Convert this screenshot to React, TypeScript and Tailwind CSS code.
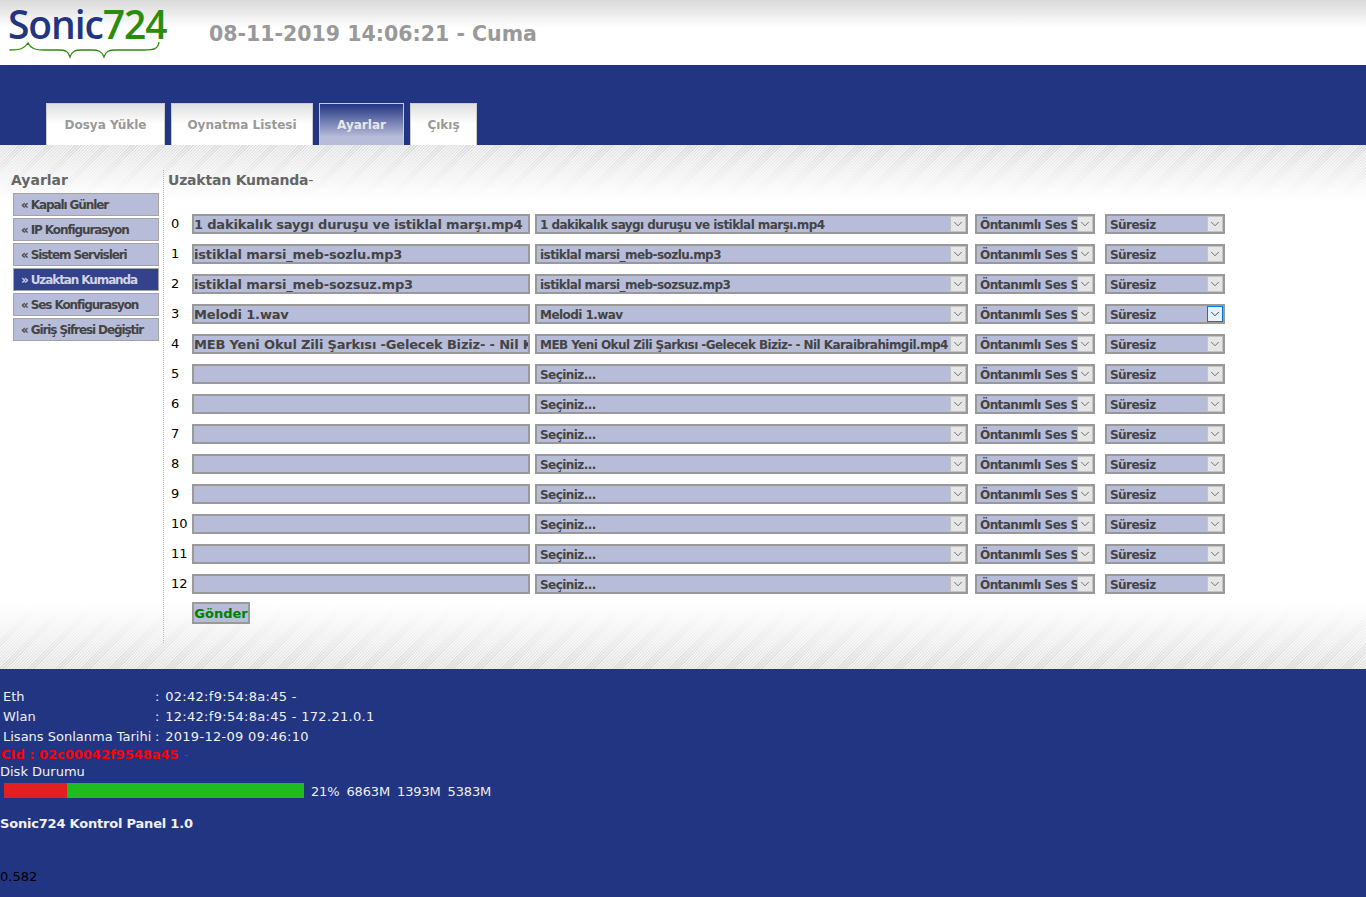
import { ChevronDown } from 'lucide-react';

const tabs = [
  { label: 'Dosya Yükle', width: 'w-[119px]', active: false },
  { label: 'Oynatma Listesi', width: 'w-[142px]', active: false },
  { label: 'Ayarlar', width: 'w-[85px]', active: true },
  { label: 'Çıkış', width: 'w-[67px]', active: false },
];

const menu = [
  { label: '« Kapalı Günler', active: false },
  { label: '« IP Konfigurasyon', active: false },
  { label: '« Sistem Servisleri', active: false },
  { label: '» Uzaktan Kumanda', active: true },
  { label: '« Ses Konfigurasyon', active: false },
  { label: '« Giriş Şifresi Değiştir', active: false },
];

const files = [
  '1 dakikalık saygı duruşu ve istiklal marşı.mp4',
  'istiklal marsi_meb-sozlu.mp3',
  'istiklal marsi_meb-sozsuz.mp3',
  'Melodi 1.wav',
  'MEB Yeni Okul Zili Şarkısı -Gelecek Biziz- - Nil Karaibrahimgil.mp4',
];

const rows = Array.from({ length: 13 }, (_, i) => i);

const SelectBox = ({ value, width, focused }: { value: string; width: string; focused?: boolean }) => (
  <div className={`relative h-5 shrink-0 border-2 border-[#999] bg-[#b7bcd9] text-[12px] leading-[16px] font-bold tracking-[-0.56px] text-[#444] ${width}`}>
    <div className="h-4 overflow-hidden pt-[1px] pr-[16px] pl-[3px] whitespace-nowrap">{value}</div>
    <div className={`absolute top-0 right-0 flex h-4 w-4 items-center justify-center ${focused ? 'border border-[#0078d7] bg-[#e5f1fb]' : 'border border-[#c4c4c4] bg-[#e6e6e6]'}`}>
      <ChevronDown size={14} strokeWidth={1.25} className={focused ? 'text-[#111]' : 'text-[#444]'} />
    </div>
  </div>
);

const App = () => {
  return (
    <div className="min-h-[897px] font-['DejaVu_Sans',Verdana,sans-serif]">
      {/* Header */}
      <div className="flex h-[65px] bg-[linear-gradient(to_bottom,#d9d9d9_0px,#ffffff_28px)]">
        <div className="ml-2 w-[201px] shrink-0">
          <div className="relative h-[65px] w-[161px]">
            <div className="pt-[2px] font-['Open_Sans',sans-serif] text-[39px] leading-[44px] font-semibold tracking-[-1.1px] text-[#22357f]">
              Sonic<span className="text-[#2a8c0a]">724</span>
            </div>
            <svg className="absolute top-[40px] left-0" width="161" height="20" viewBox="0 0 161 20" fill="none">
              <path d="M1.5 10 C12 10 16 9 20 3 C23 9 28 10 36 10 L50 10 C58 10 60 11 62 17 C64 11 67 10 74 10 L84 10 C90 10 94 11 96 17 C98 11 101 10 108 10 L136 10 C146 10 150 9 151 2" stroke="#2a8c0a" strokeWidth="1.3" />
            </svg>
          </div>
        </div>
        <div className="pt-[21px] text-[20.5px] leading-[26px] font-bold text-[#999]">08-11-2019 14:06:21 - Cuma</div>
      </div>

      {/* Tabs band */}
      <div className="flex h-[80px] items-end gap-[6px] bg-[#223582] pl-[46px]">
        {tabs.map((tab) => (
          <div
            key={tab.label}
            className={`flex h-[42px] items-center justify-center border border-b-0 border-[#ccc] text-[12px] font-bold ${tab.width} ${
              tab.active
                ? 'bg-[linear-gradient(to_bottom,#223582,#b7bcd9_80%)] text-[#e8e8e8]'
                : 'bg-[linear-gradient(to_bottom,#e0e0e0,#ffffff_50%)] text-[#999]'
            }`}
          >
            {tab.label}
          </div>
        ))}
      </div>

      {/* Content */}
      <div className="flex h-[524px] bg-[linear-gradient(to_bottom,rgba(255,255,255,0.1)_0px,#ffffff_55px,#ffffff_458px,rgba(255,255,255,0.1)_100%),repeating-linear-gradient(135deg,#d8d8d8_0px,#d8d8d8_1px,#efefef_1px,#efefef_2.2px)]">
        <aside className="w-[163px] shrink-0 pt-[25px] pl-[11px]">
          <div className="h-[23px] text-[14px] leading-5 font-bold text-[#666]">Ayarlar</div>
          <div className="flex flex-col gap-[2px] pl-[2px]">
            {menu.map((item) => (
              <div
                key={item.label}
                className={`h-[23px] w-[146px] border border-[#a3a3a3] pl-[7px] text-[12px] leading-[23px] font-bold tracking-[-1.1px] whitespace-nowrap ${
                  item.active ? 'bg-[#33428a] text-[#d0d4e8]' : 'bg-[#b7bcd9] text-[#444]'
                }`}
              >
                {item.label}
              </div>
            ))}
          </div>
        </aside>

        <main className="mt-[25px] mb-[26px] flex-1 border-l border-dotted border-[#bbb] pl-1">
          <div className="h-[44px] text-[14px] leading-5 font-bold tracking-[-0.2px] text-[#666]">
            Uzaktan Kumanda<span className="font-normal">-</span>
          </div>
          <div className="flex flex-col gap-[10px]">
            {rows.map((i) => (
              <div key={i} className="flex h-5 items-center">
                <div className="w-6 shrink-0 pl-[3px] text-[13px] text-black">{i}</div>
                <div className="h-5 w-[338px] shrink-0 overflow-hidden border-2 border-[#999] bg-[#b7bcd9] text-[13px] leading-[17px] font-bold tracking-[-0.17px] whitespace-nowrap text-[#444]">
                  {files[i] ?? ''}
                </div>
                <div className="ml-[5px]">
                  <SelectBox value={files[i] ?? 'Seçiniz...'} width="w-[433px]" />
                </div>
                <div className="ml-[7px]">
                  <SelectBox value="Öntanımlı Ses Seviyesi" width="w-[120px]" />
                </div>
                <div className="ml-[10px]">
                  <SelectBox value="Süresiz" width="w-[120px]" focused={i === 3} />
                </div>
              </div>
            ))}
          </div>
          <div className="mt-2 ml-6 h-[22px] w-[58px] border-2 border-[#999] bg-[#b7bcd9] text-center text-[13px] leading-[19px] font-bold text-[#008000]">
            Gönder
          </div>
        </main>
      </div>

      {/* Footer */}
      <footer className="h-[228px] bg-[#223582] pt-[18px] text-[13px] text-[#f0f0f0]">
        <div className="grid grid-cols-[152px_1fr] pl-[3px] leading-5">
          <div>Eth</div>
          <div className="tracking-[0.3px]">: <span className="ml-[1px]">02:42:f9:54:8a:45 -</span></div>
          <div>Wlan</div>
          <div className="tracking-[0.3px]">: <span className="ml-[1px]">12:42:f9:54:8a:45 - 172.21.0.1</span></div>
          <div>Lisans Sonlanma Tarihi</div>
          <div className="tracking-[0.3px]">: <span className="ml-[1px]">2019-12-09 09:46:10</span></div>
        </div>
        <div className="pl-[1px] text-[13px] leading-4 font-bold text-[#ff0000]">
          CId : 02c00042f9548a45 <span className="font-normal">-</span>
        </div>
        <div className="mt-[1px] leading-[15px]">Disk Durumu</div>
        <div className="mt-1 flex items-start pl-1">
          <div className="flex h-[15px] w-[300px]">
            <div className="w-[63px] bg-[#e32020]" />
            <div className="flex-1 bg-[#1fbc1f]" />
          </div>
          <div className="ml-[7px] flex gap-[7px] leading-[18px] tracking-[-0.15px]">
            <span>21%</span>
            <span>6863M</span>
            <span>1393M</span>
            <span>5383M</span>
          </div>
        </div>
        <div className="mt-[13px] leading-5 font-bold tracking-[-0.2px]">Sonic724 Kontrol Panel 1.0</div>
        <div className="mt-[33px] leading-5 text-[#000]">0.582</div>
      </footer>
    </div>
  );
};

export default App;
